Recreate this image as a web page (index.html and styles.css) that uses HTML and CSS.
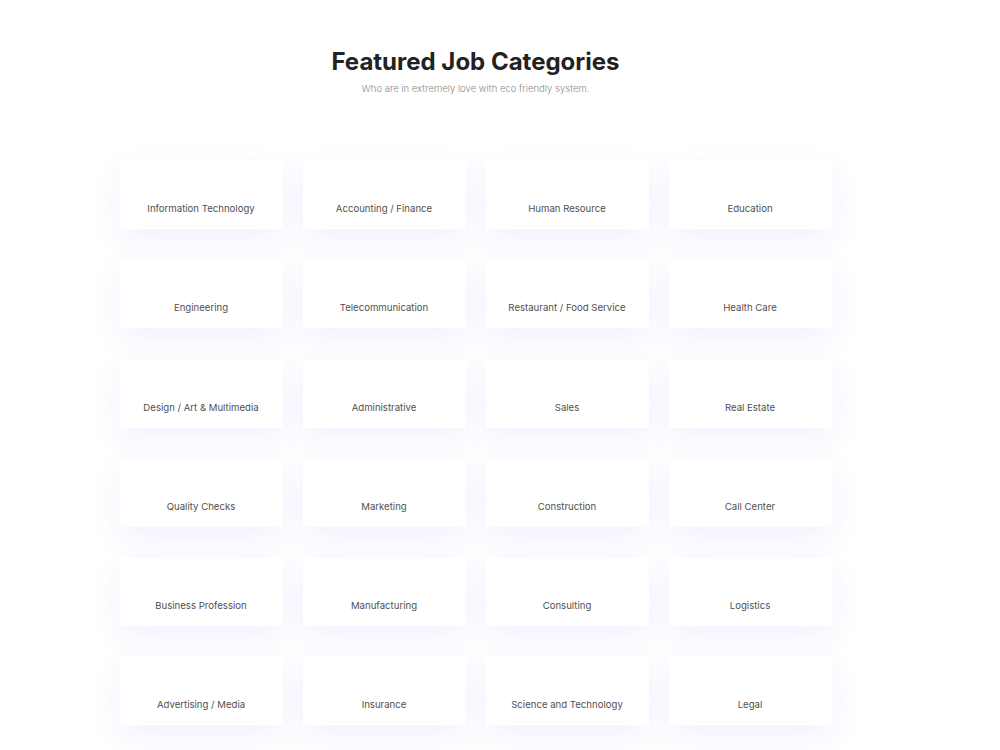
FILE: index.html
```html
<!DOCTYPE html>
<html lang="en">
<head>
<meta charset="utf-8">
<title>Featured Job Categories</title>
<link rel="stylesheet" href="styles.css">
</head>
<body>
<section class="categories">
  <header class="section-head">
    <h1 class="section-title">Featured Job Categories</h1>
    <p class="section-sub">Who are in extremely love with eco friendly system.</p>
  </header>
  <div class="category-grid">
    <a class="category-card" href="#">Information Technology</a>
    <a class="category-card" href="#">Accounting / Finance</a>
    <a class="category-card" href="#">Human Resource</a>
    <a class="category-card" href="#">Education</a>
    <a class="category-card" href="#">Engineering</a>
    <a class="category-card" href="#">Telecommunication</a>
    <a class="category-card" href="#">Restaurant / Food Service</a>
    <a class="category-card" href="#">Health Care</a>
    <a class="category-card" href="#">Design / Art &amp; Multimedia</a>
    <a class="category-card" href="#">Administrative</a>
    <a class="category-card" href="#">Sales</a>
    <a class="category-card" href="#">Real Estate</a>
    <a class="category-card" href="#">Quality Checks</a>
    <a class="category-card" href="#">Marketing</a>
    <a class="category-card" href="#">Construction</a>
    <a class="category-card" href="#">Call Center</a>
    <a class="category-card" href="#">Business Profession</a>
    <a class="category-card" href="#">Manufacturing</a>
    <a class="category-card" href="#">Consulting</a>
    <a class="category-card" href="#">Logistics</a>
    <a class="category-card" href="#">Advertising / Media</a>
    <a class="category-card" href="#">Insurance</a>
    <a class="category-card" href="#">Science and Technology</a>
    <a class="category-card" href="#">Legal</a>
  </div>
</section>
</body>
</html>
```

FILE: styles.css
```css
* {
  box-sizing: border-box;
}

html, body {
  margin: 0;
  background: #ffffff;
}

body {
  font-family: "Inter", "Noto Sans", sans-serif;
  color: #222222;
}

.categories {
  width: 951px;
  padding: 46px 0 60px;
}

.section-head {
  text-align: center;
}

.section-title {
  margin: 0;
  font-size: 24px;
  line-height: 32px;
  font-weight: 700;
  color: #222222;
}

.section-sub {
  margin: 4px 0 0;
  font-size: 9.5px;
  line-height: 14px;
  font-weight: 300;
  color: #8a8a8a;
}

.category-grid {
  display: grid;
  grid-template-columns: repeat(4, 163px);
  grid-auto-rows: 68px;
  column-gap: 20px;
  row-gap: 31.3px;
  justify-content: center;
  margin-top: 65px;
}

.category-card {
  display: block;
  background: #ffffff;
  box-shadow: 0 10px 30px rgba(98, 100, 255, 0.09);
  padding-top: 42px;
  text-align: center;
  font-size: 9.6px;
  line-height: 12px;
  font-weight: 400;
  color: #505050;
  text-decoration: none;
}
```
